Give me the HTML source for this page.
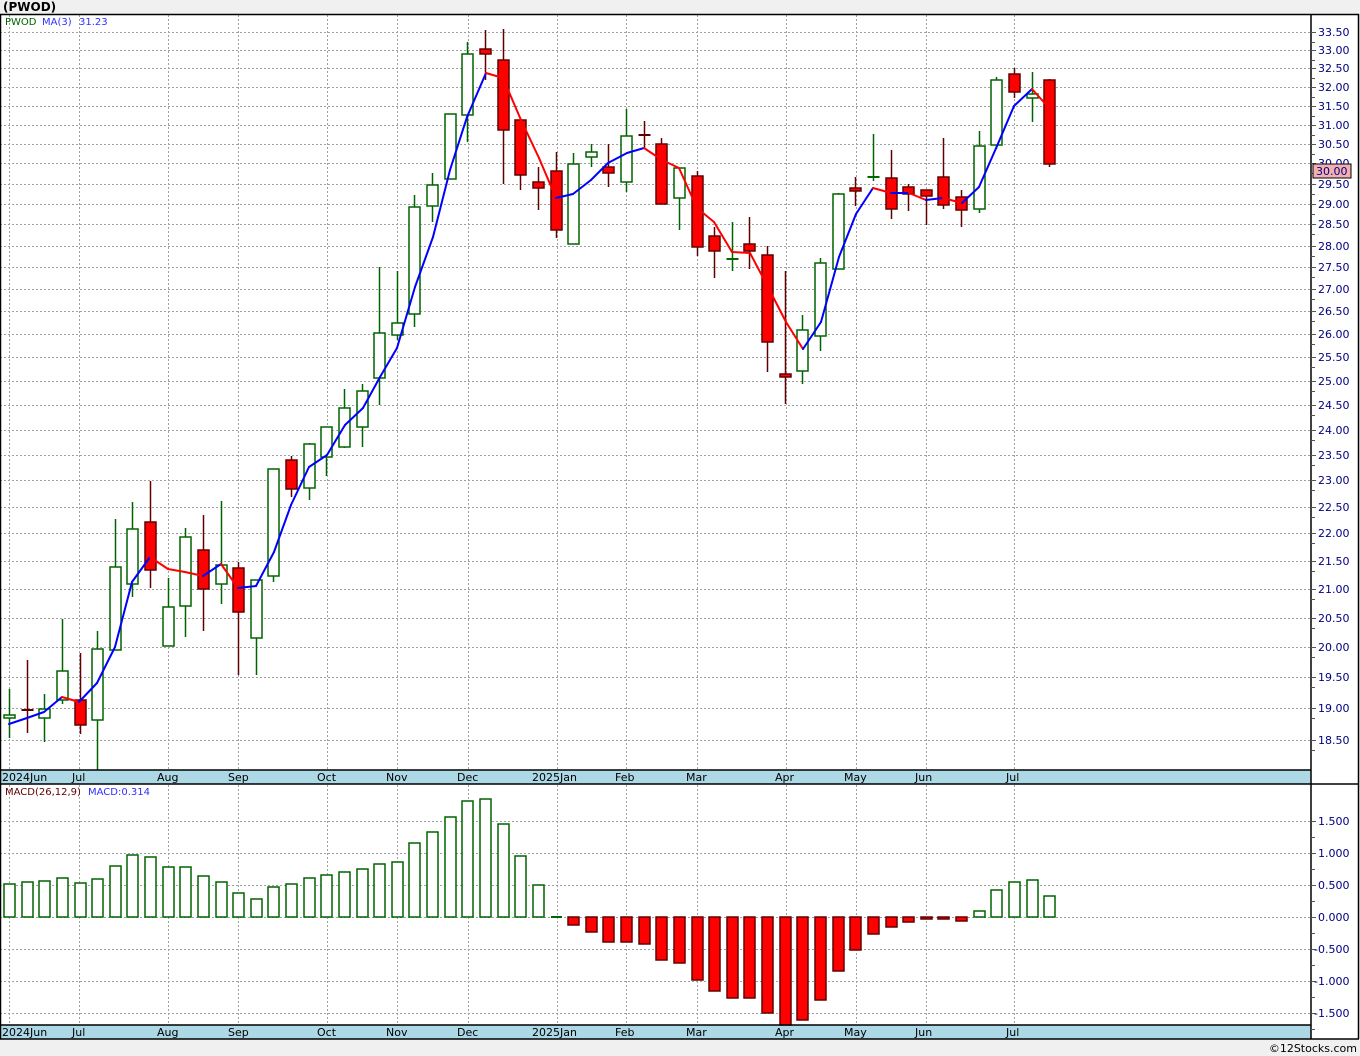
<!DOCTYPE html>
<html><head><meta charset="utf-8"><style>
body{margin:0;background:#f0f0f0;width:1360px;height:1056px;overflow:hidden;font-family:"DejaVu Sans","Liberation Sans",sans-serif}
svg{position:absolute;left:0;top:0}
text{font-family:"DejaVu Sans","Liberation Sans",sans-serif}
</style></head><body>
<svg width="1360" height="1056" xmlns="http://www.w3.org/2000/svg">
<rect x="0" y="0" width="1360" height="1056" fill="#f0f0f0"/>
<text x="3" y="11" font-size="12" font-weight="bold" fill="#000">(PWOD)</text>
<rect x="0" y="14" width="1359" height="1025" fill="#fff"/>
<g id="grid" stroke="#a0a0a0" stroke-dasharray="2,2" stroke-width="1"></g>
<rect x="0" y="770" width="1311" height="14" fill="#add8e6"/>
<rect x="0" y="1025" width="1311" height="14" fill="#add8e6"/>
<g id="cand"></g>
<g id="ma" fill="none" stroke-width="2"></g>
<g id="macd"></g>
<g stroke="#000" stroke-width="1.5" fill="none">
<line x1="0.5" y1="14" x2="0.5" y2="1039"/>
<line x1="0" y1="14.5" x2="1359" y2="14.5"/>
<line x1="1311" y1="14" x2="1311" y2="1039"/>
<line x1="1358.5" y1="14" x2="1358.5" y2="1039"/>
<line x1="0" y1="770" x2="1311" y2="770"/>
<line x1="0" y1="784" x2="1359" y2="784"/>
<line x1="0" y1="1025" x2="1311" y2="1025"/>
<line x1="0" y1="1039" x2="1359" y2="1039"/>
</g>
<g id="ticks" stroke="#555" stroke-width="1"></g>
<g font-size="11" fill="#000080">
<text x="1318" y="36">33.50</text><text x="1318" y="54">33.00</text><text x="1318" y="72">32.50</text><text x="1318" y="91">32.00</text><text x="1318" y="110">31.50</text><text x="1318" y="129">31.00</text><text x="1318" y="148">30.50</text><text x="1318" y="167">30.00</text><text x="1318" y="188">29.50</text><text x="1318" y="208">29.00</text><text x="1318" y="228">28.50</text><text x="1318" y="250">28.00</text><text x="1318" y="271">27.50</text><text x="1318" y="293">27.00</text><text x="1318" y="315">26.50</text><text x="1318" y="338">26.00</text><text x="1318" y="361">25.50</text><text x="1318" y="385">25.00</text><text x="1318" y="409">24.50</text><text x="1318" y="434">24.00</text><text x="1318" y="459">23.50</text><text x="1318" y="484">23.00</text><text x="1318" y="511">22.50</text><text x="1318" y="537">22.00</text><text x="1318" y="565">21.50</text><text x="1318" y="593">21.00</text><text x="1318" y="622">20.50</text><text x="1318" y="651">20.00</text><text x="1318" y="681">19.50</text><text x="1318" y="712">19.00</text><text x="1318" y="744">18.50</text>
<text x="1318" y="825">1.500</text><text x="1318" y="857">1.000</text><text x="1318" y="889">0.500</text><text x="1318" y="921">0.000</text><text x="1314" y="953">-0.500</text><text x="1314" y="985">-1.000</text><text x="1314" y="1017">-1.500</text>
</g>
<rect x="1313" y="164" width="38" height="14" fill="#f4b0b0" stroke="#000"/>
<text x="1316" y="175" font-size="11" fill="#000080">30.00</text>
<text x="5" y="25" font-size="10" fill="#006400">PWOD</text>
<text x="42" y="25" font-size="10" fill="#3030ff">MA(3)</text>
<text x="79" y="25" font-size="10" fill="#3030ff">31.23</text>
<text x="5" y="795" font-size="10" fill="#600000">MACD(26,12,9)</text>
<text x="88" y="795" font-size="10" fill="#3030ff">MACD:0.314</text>
<g font-size="11" fill="#000">
<text x="2" y="781">2024Jun</text><text x="72" y="781">Jul</text><text x="157" y="781">Aug</text><text x="228" y="781">Sep</text><text x="317" y="781">Oct</text><text x="386" y="781">Nov</text><text x="457" y="781">Dec</text><text x="532" y="781">2025Jan</text><text x="615" y="781">Feb</text><text x="686" y="781">Mar</text><text x="775" y="781">Apr</text><text x="844" y="781">May</text><text x="915" y="781">Jun</text><text x="1006" y="781">Jul</text>
<text x="2" y="1036">2024Jun</text><text x="72" y="1036">Jul</text><text x="157" y="1036">Aug</text><text x="228" y="1036">Sep</text><text x="317" y="1036">Oct</text><text x="386" y="1036">Nov</text><text x="457" y="1036">Dec</text><text x="532" y="1036">2025Jan</text><text x="615" y="1036">Feb</text><text x="686" y="1036">Mar</text><text x="775" y="1036">Apr</text><text x="844" y="1036">May</text><text x="915" y="1036">Jun</text><text x="1006" y="1036">Jul</text>
</g>
<text x="1357" y="1052" font-size="11" fill="#000" text-anchor="end">©12Stocks.com</text>
</svg>
<script>
var NS="http://www.w3.org/2000/svg";
function el(p,t,a){var e=document.createElementNS(NS,t);for(var k in a)e.setAttribute(k,a[k]);document.getElementById(p).appendChild(e);return e;}
var py=[32,50,68,87,106,125,144,163,184,204,224,246,267,289,311,334,357,381,405,430,455,480,507,533,561,589,618,647,677,708,740];
var my=[821,853,885,917,949,981,1013];
var gx=[9,79,168,238,327,397,468,557,626,697,786,856,926,1014];
py.forEach(function(y){el('grid','line',{x1:0,x2:1311,y1:y+.5,y2:y+.5});el('ticks','line',{x1:1311,x2:1316,y1:y+.5,y2:y+.5});el('ticks','line',{x1:1311,x2:1315,y1:y+10.5,y2:y+10.5});});
my.forEach(function(y){el('grid','line',{x1:0,x2:1311,y1:y+.5,y2:y+.5});el('ticks','line',{x1:1311,x2:1316,y1:y+.5,y2:y+.5});el('ticks','line',{x1:1311,x2:1315,y1:y+16.5,y2:y+16.5});});
gx.forEach(function(x){el('grid','line',{x1:x+.5,x2:x+.5,y1:15,y2:770});el('grid','line',{x1:x+.5,x2:x+.5,y1:785,y2:1025});});
// [type g/r/gd/rd, bodyTop, bodyBot, high, low]
var C=[['g',715,718,689,738],['rd',710,710,660,733],['g',709,718,694,742],['g',671,700,619,704],['r',700,725,653,734],['g',649,720,631,770],['g',567,650,519,650],['g',529,584,502,597],['r',522,570,481,588],['g',607,646,578,646],['g',537,606,528,637],['r',550,589,515,631],['g',565,584,501,604],['r',568,612,562,675],['g',580,638,580,675],['g',469,576,469,582],['r',460,489,456,497],['g',444,488,443,500],['g',427,457,427,476],['g',408,447,389,448],['g',391,427,384,447],['g',333,378,267,405],['g',323,335,271,340],['g',207,314,195,327],['g',185,206,173,222],['g',114,179,114,179],['g',54,115,42,142],['r',49,54,30,80],['r',60,130,29,184],['r',120,175,120,190],['r',182,188,167,210],['r',171,230,152,238],['g',164,244,153,244],['g',152,157,144,167],['r',167,173,144,187],['g',136,182,109,192],['rd',135,135,121,149],['r',144,204,138,204],['g',168,198,168,230],['r',176,247,171,256],['r',236,251,227,278],['gd',259,259,222,271],['r',244,251,217,269],['r',255,342,246,372],['r',374,377,271,404],['g',330,371,315,384],['g',263,336,258,351],['g',194,269,193,269],['r',188,191,177,206],['gd',177,177,134,181],['r',178,209,150,219],['r',187,194,184,211],['r',190,196,190,225],['r',177,205,138,209],['r',197,210,190,227],['g',146,209,131,213],['g',80,145,77,149],['r',74,92,68,98],['g',94,98,72,122],['r',80,164,79,167]];
function X(i){return Math.round(9+i*17.63);}
C.forEach(function(c,i){var x=X(i)+.5,t=c[0];var col=(t[0]=='g')?'#006400':'#600000';
el('cand','line',{x1:x,x2:x,y1:c[3],y2:c[4],stroke:col,'stroke-width':1.5});
if(t.length==2){el('cand','line',{x1:x-6,x2:x+6,y1:c[1],y2:c[1],stroke:col,'stroke-width':2});}
else el('cand','rect',{x:x-5.5,y:c[1],width:11,height:Math.max(2,c[2]-c[1]),fill:t=='g'?'#fff':'#ff0000',stroke:col,'stroke-width':1.5});});
var M=[[9,724],[27,718],[44,712],[62,697],[79,702],[97,683],[115,647],[132,582],[150,557],[168,569],[185,572],[203,576],[221,564],[238,588],[256,586],[274,552],[291,505],[309,467],[327,455],[345,425],[363,408],[380,377],[397,348],[415,287],[433,237],[450,170],[467,117],[486,73],[503,78],[521,120],[539,158],[556,198],[573,194],[591,180],[608,163],[627,153],[644,148],[662,160],[679,168],[697,208],[714,222],[732,252],[750,253],[768,287],[786,322],[803,349],[821,322],[839,257],[856,214],[873,188],[891,193],[909,193],[926,200],[943,198],[962,203],[979,187],[997,146],[1014,106],[1032,89],[1050,109]];
for(var i=1;i<M.length;i++){el('ma','line',{x1:M[i-1][0],y1:M[i-1][1],x2:M[i][0],y2:M[i][1],stroke:M[i][1]<=M[i-1][1]?'#0000ff':'#ff0000','stroke-linecap':'round'});}
var B=[884,882,881,878,883,879,866,855,857,867,867,876,882,893,899,887,884,878,875,872,869,864,862,843,832,817,801,799,824,856,885,916,925,932,942,942,944,960,963,980,991,998,998,1013,1025,1020,1000,971,950,934,927,922,919,919,921,911,890,882,880,896];
var Z=917;
B.forEach(function(b,i){var x=X(i)+.5;
if(b<Z-1)el('macd','rect',{x:x-5.5,y:b,width:11,height:Z-b,fill:'#fff',stroke:'#006400','stroke-width':1.5});
else if(b>Z+1)el('macd','rect',{x:x-5.5,y:Z,width:11,height:b-Z,fill:'#ff0000',stroke:'#600000','stroke-width':1.5});
else el('macd','line',{x1:x-5.5,x2:x+5.5,y1:Z,y2:Z,stroke:'#006400','stroke-width':2});});
</script>
</body></html>
